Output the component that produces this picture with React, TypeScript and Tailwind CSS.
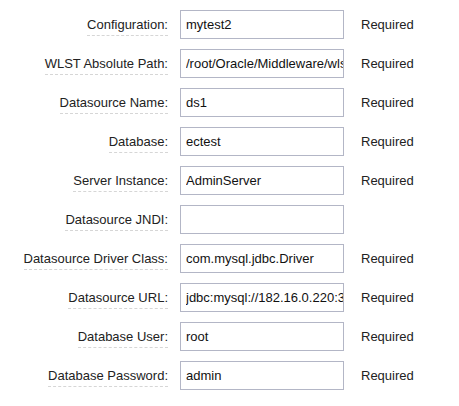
import React from "react";

type Field = { label: string; value: string; required: boolean };

const fields: Field[] = [
  { label: "Configuration:", value: "mytest2", required: true },
  { label: "WLST Absolute Path:", value: "/root/Oracle/Middleware/wlserver_10.3/common/bin/wlst.sh", required: true },
  { label: "Datasource Name:", value: "ds1", required: true },
  { label: "Database:", value: "ectest", required: true },
  { label: "Server Instance:", value: "AdminServer", required: true },
  { label: "Datasource JNDI:", value: "", required: false },
  { label: "Datasource Driver Class:", value: "com.mysql.jdbc.Driver", required: true },
  { label: "Datasource URL:", value: "jdbc:mysql://182.16.0.220:3306/ectest", required: true },
  { label: "Database User:", value: "root", required: true },
  { label: "Database Password:", value: "admin", required: true },
];

function FormRow({ label, value, required }: Field) {
  return (
    <div className="flex items-center h-[29px]">
      <div className="w-[168px] text-right">
        <span className="inline-block leading-[15px] pt-[3px] pb-[3px] border-b border-dashed border-[#d6d6d6] text-[#222]">
          {label}
        </span>
      </div>
      <input
        readOnly
        defaultValue={value}
        className="ml-[12px] w-[164px] h-[29px] border border-[#b3b6c6] bg-white pl-[5px] pr-0 text-[13px] text-[#111] outline-none"
        style={{ fontFamily: '"Liberation Sans", Arial, sans-serif' }}
      />
      {required ? <span className="ml-[17px] text-[#222]">Required</span> : null}
    </div>
  );
}

export default function App() {
  return (
    <div
      className="w-[459px] h-[406px] bg-white pt-[10px] flex flex-col gap-[10px] text-[13px]"
      style={{ fontFamily: '"Liberation Sans", Arial, sans-serif' }}
    >
      {fields.map((f) => (
        <FormRow key={f.label} {...f} />
      ))}
    </div>
  );
}
